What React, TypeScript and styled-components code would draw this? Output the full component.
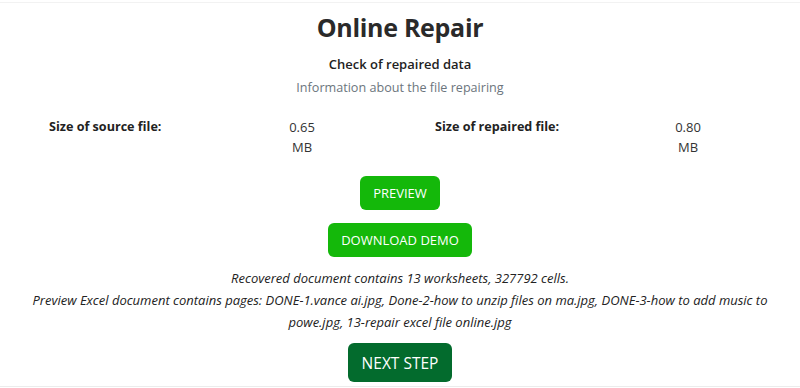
import { FC } from 'react'
import styled, { createGlobalStyle } from 'styled-components'

const GlobalStyle = createGlobalStyle`
  body {
    margin: 0;
    background: #ffffff;
    font-family: 'Open Sans', 'Noto Sans', sans-serif;
    color: #222222;
  }
`

const sizes = [
  { label: 'Size of source file:', value: '0.65', unit: 'MB' },
  { label: 'Size of repaired file:', value: '0.80', unit: 'MB' },
]

const App: FC = () => {
  return (
    <>
      <GlobalStyle />
      <Page>
        <Title>Online Repair</Title>
        <Subtitle>Check of repaired data</Subtitle>
        <Muted>Information about the file repairing</Muted>
        <SizeRow>
          {sizes.map((item) => (
            <SizePair key={item.label}>
              <SizeLabel>{item.label}</SizeLabel>
              <SizeValue>
                {item.value} {item.unit}
              </SizeValue>
            </SizePair>
          ))}
        </SizeRow>
        <Button>PREVIEW</Button>
        <Button>DOWNLOAD DEMO</Button>
        <Summary>
          Recovered document contains 13 worksheets, 327792 cells.
          <br />
          Preview Excel document contains pages: DONE-1.vance ai.jpg, Done-2-how
          to unzip files on ma.jpg, DONE-3-how to add music to powe.jpg,
          13-repair excel file online.jpg
        </Summary>
        <Button $dark>NEXT STEP</Button>
      </Page>
    </>
  )
}

export default App

const Page = styled.div`
  display: flex;
  flex-direction: column;
  align-items: center;
  margin-top: 2px;
  height: 383px;
  border-top: 1px solid #f2f2f2;
  border-bottom: 1px solid #ececec;
`

const Title = styled.h1`
  margin: 9px 0 0;
  font-size: 25px;
  line-height: 30px;
  font-weight: 700;
  color: #2a2a2a;
  letter-spacing: -0.3px;
`

const Subtitle = styled.div`
  margin-top: 12px;
  font-size: 13px;
  line-height: 20px;
  font-weight: 600;
  color: #222222;
`

const Muted = styled.div`
  margin-top: 4px;
  font-size: 12.6px;
  line-height: 20px;
  color: #6c757d;
`

const SizeRow = styled.div`
  align-self: stretch;
  display: flex;
  gap: 113px;
  padding-left: 49px;
  margin-top: 19px;
`

const SizePair = styled.div`
  display: grid;
  grid-template-columns: 1fr 40px;
  width: 273px;
`

const SizeLabel = styled.div`
  font-size: 12.6px;
  line-height: 20px;
  font-weight: 700;
  color: #222222;
`

const SizeValue = styled.div`
  font-size: 13px;
  line-height: 20px;
  text-align: center;
  color: #333333;
`

const Button = styled.button<{ $dark?: boolean }>`
  margin-top: ${(p) => (p.$dark ? '10px' : '19px')};
  height: ${(p) => (p.$dark ? '39px' : '34px')};
  padding: 0 ${(p) => (p.$dark ? '14px' : '13px')};
  border: none;
  border-radius: 6px;
  background: ${(p) => (p.$dark ? '#036b2d' : '#14b80a')};
  color: #ffffff;
  font-family: 'Open Sans', 'Noto Sans', sans-serif;
  font-size: ${(p) => (p.$dark ? '15.5px' : '13px')};
  cursor: pointer;

  & + & {
    margin-top: 13px;
  }
`

const Summary = styled.p`
  margin: 10px 0 0;
  padding: 0 28px;
  font-size: 13px;
  line-height: 22px;
  font-style: italic;
  text-align: center;
  color: #222222;
`
